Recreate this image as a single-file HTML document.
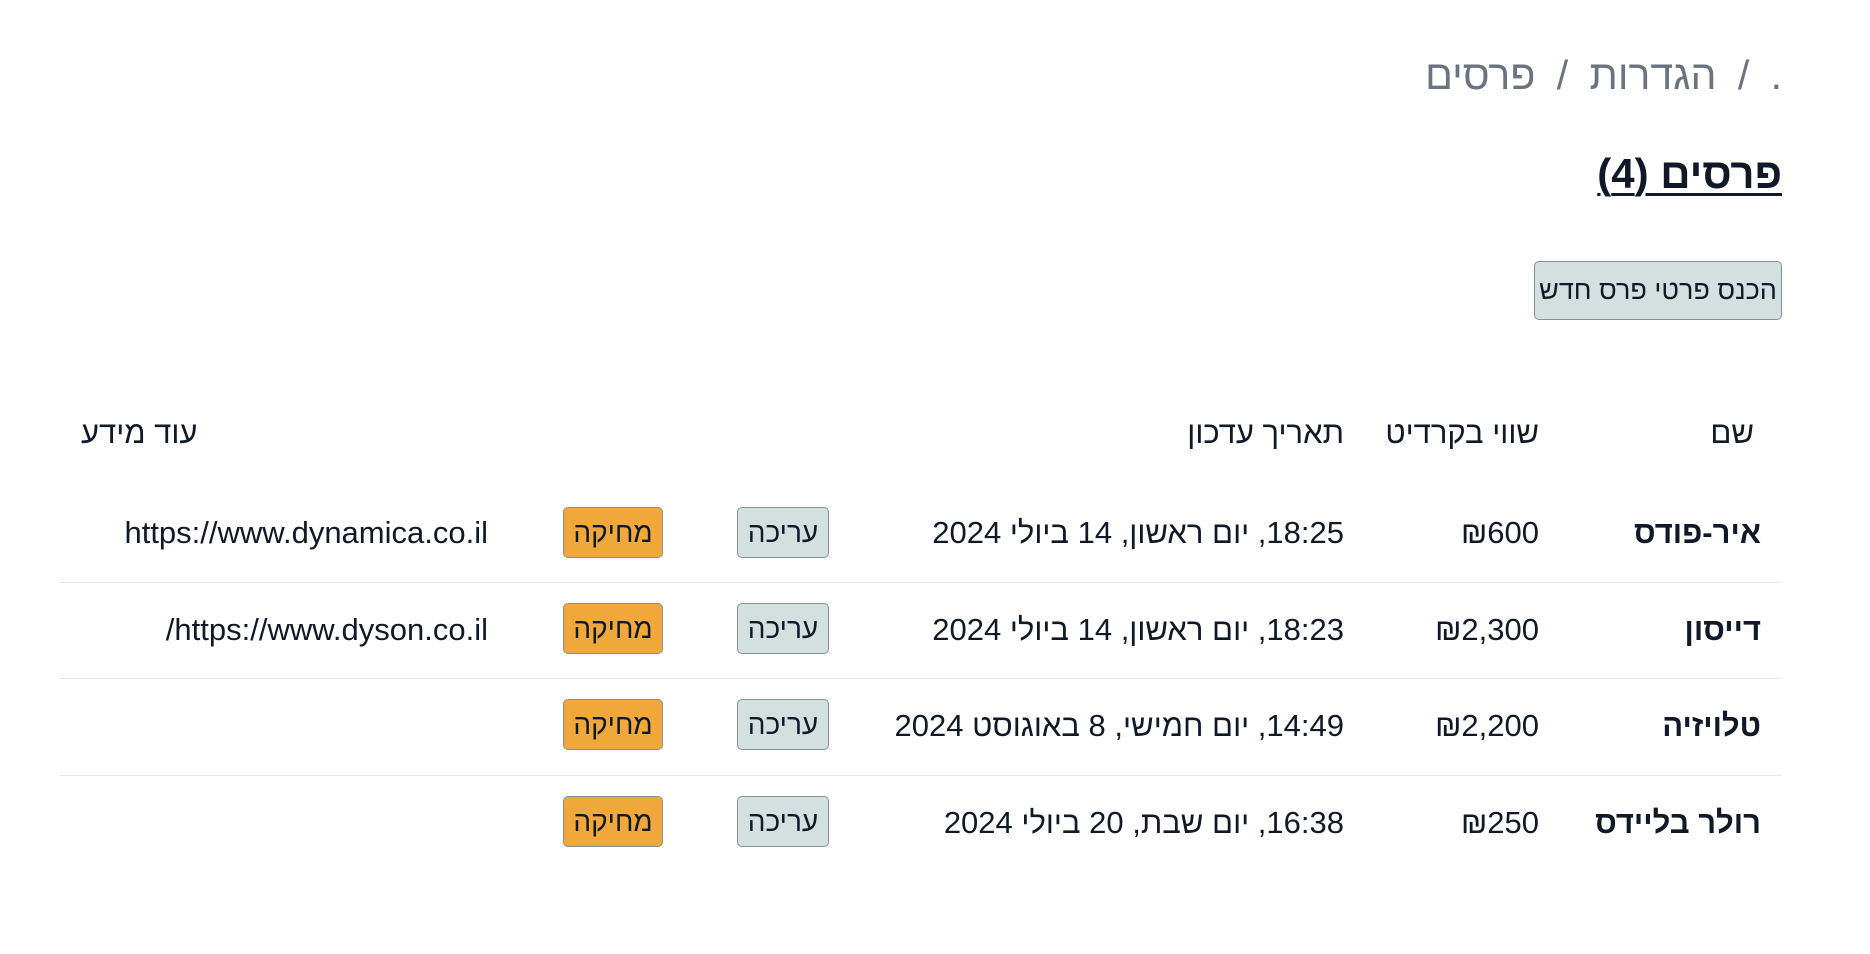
<!DOCTYPE html>
<html dir="rtl"><head><meta charset="utf-8"><style>
body{margin:0;width:1870px;height:954px;background:#fff;font-family:"Liberation Sans","DejaVu Sans",sans-serif;color:#111827;position:relative;overflow:hidden}
.a{position:absolute;white-space:nowrap}
.bc{right:88px;top:52px;font-size:41px;color:#6b7280;word-spacing:10px}
.h{right:88px;top:150px;font-size:42px;font-weight:bold;text-decoration:underline;text-underline-offset:5px;text-decoration-thickness:3px}
.btn{position:absolute;border:1px solid #8a8f94;border-radius:5px;background:#d4e0df;font-size:27px;display:flex;align-items:center;justify-content:center;box-sizing:border-box}
.del{background:#f0a83a;font-size:28px}
.ed{font-size:28px}
.t{font-size:31px;line-height:34px}
.line{position:absolute;left:60px;right:88px;height:1px;background:#e5e7eb}
</style></head><body>
<div class="a bc">. / הגדרות / פרסים</div>
<div class="a h">פרסים (4)</div>
<div class="btn" style="left:1534px;top:261px;width:248px;height:59px;">הכנס פרטי פרס חדש</div>

<div class="a t" style="right:116px;top:416px">שם</div>
<div class="a t" style="right:331px;top:416px">שווי בקרדיט</div>
<div class="a t" style="right:526px;top:416px">תאריך עדכון</div>
<div class="a t" style="left:81px;top:416px">עוד מידע</div>

<div class="line" style="top:582px"></div>
<div class="line" style="top:678px"></div>
<div class="line" style="top:775px"></div>

<!-- row 1 -->
<div class="a t" style="right:109px;top:516px;font-weight:bold">איר-פודס</div>
<div class="a t" dir="ltr" style="right:331px;top:516px">₪600</div>
<div class="a t" style="right:526px;top:516px">18:25, יום ראשון, 14 ביולי 2024</div>
<div class="btn ed" style="left:737px;top:507px;width:92px;height:51px">עריכה</div>
<div class="btn del" style="left:563px;top:507px;width:100px;height:51px">מחיקה</div>
<div class="a t" dir="ltr" style="right:1382px;top:516px">https://www.dynamica.co.il</div>
<!-- row 2 -->
<div class="a t" style="right:109px;top:613px;font-weight:bold">דייסון</div>
<div class="a t" dir="ltr" style="right:331px;top:613px">₪2,300</div>
<div class="a t" style="right:526px;top:613px">18:23, יום ראשון, 14 ביולי 2024</div>
<div class="btn ed" style="left:737px;top:603px;width:92px;height:51px">עריכה</div>
<div class="btn del" style="left:563px;top:603px;width:100px;height:51px">מחיקה</div>
<div class="a t" style="right:1382px;top:613px">https://www.dyson.co.il/</div>
<!-- row 3 -->
<div class="a t" style="right:109px;top:709px;font-weight:bold">טלויזיה</div>
<div class="a t" dir="ltr" style="right:331px;top:709px">₪2,200</div>
<div class="a t" style="right:526px;top:709px">14:49, יום חמישי, 8 באוגוסט 2024</div>
<div class="btn ed" style="left:737px;top:699px;width:92px;height:51px">עריכה</div>
<div class="btn del" style="left:563px;top:699px;width:100px;height:51px">מחיקה</div>
<!-- row 4 -->
<div class="a t" style="right:109px;top:806px;font-weight:bold">רולר בליידס</div>
<div class="a t" dir="ltr" style="right:331px;top:806px">₪250</div>
<div class="a t" style="right:526px;top:806px">16:38, יום שבת, 20 ביולי 2024</div>
<div class="btn ed" style="left:737px;top:796px;width:92px;height:51px">עריכה</div>
<div class="btn del" style="left:563px;top:796px;width:100px;height:51px">מחיקה</div>
</body></html>
